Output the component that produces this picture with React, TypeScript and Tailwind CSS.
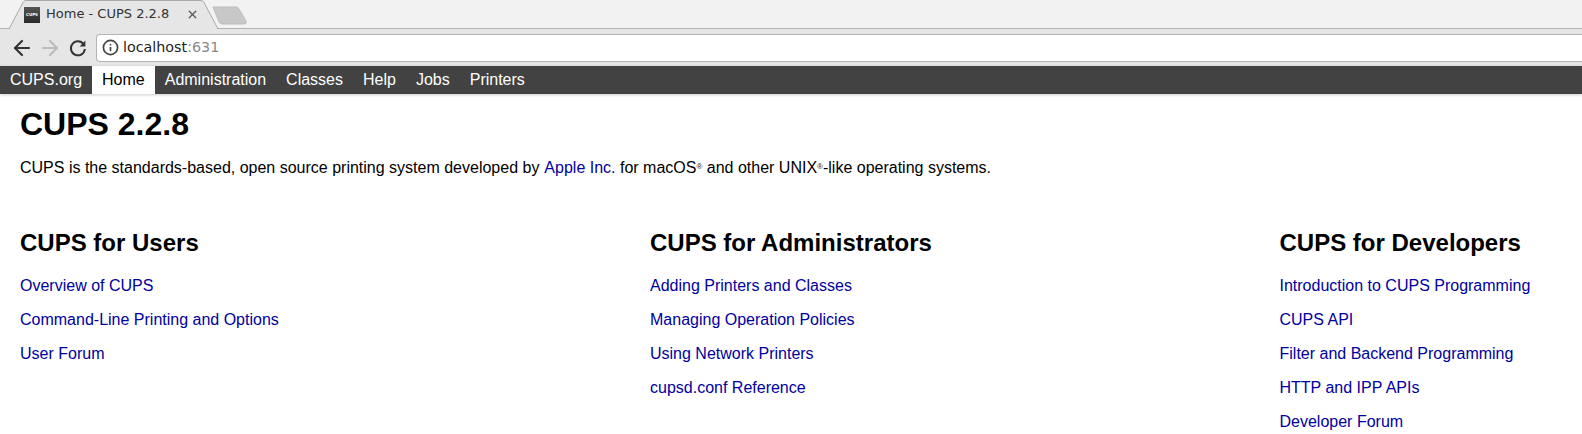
import { ArrowLeft, ArrowRight, Info, X } from 'lucide-react';

const navItems = ['Administration', 'Classes', 'Help', 'Jobs', 'Printers'];

const columns = [
  {
    title: 'CUPS for Users',
    links: ['Overview of CUPS', 'Command-Line Printing and Options', 'User Forum'],
  },
  {
    title: 'CUPS for Administrators',
    links: ['Adding Printers and Classes', 'Managing Operation Policies', 'Using Network Printers', 'cupsd.conf Reference'],
  },
  {
    title: 'CUPS for Developers',
    links: ['Introduction to CUPS Programming', 'CUPS API', 'Filter and Backend Programming', 'HTTP and IPP APIs', 'Developer Forum'],
  },
];

export default function App() {
  return (
    <div className="h-[434px] overflow-hidden bg-white font-['Liberation_Sans',Arial,sans-serif] text-black">
      {/* Browser tab strip */}
      <div className="relative h-[29px] bg-[#f2f2f2] border-b border-[#b4b4b4] font-['DejaVu_Sans',sans-serif]">
        <svg className="absolute left-[6px] top-0" width="244" height="29" viewBox="0 0 244 29">
          <path d="M3 29 L17 2.5 Q18 0.5 20 0.5 L195 0.5 Q197 0.5 198 2.5 L212 29 Z" fill="#e6e6e6" stroke="#a8a8a8" />
          <path d="M4 29 L211 29" stroke="#e6e6e6" strokeWidth="2" />
          <path d="M207 7 L230 7 Q232 7 233 9 L240 21 Q241 24 238 24 L216 24 Q214 24 213 22 Z" fill="#c8c8c8" stroke="#bdbdbd" />
        </svg>
        <div className="absolute left-[24px] top-[7px] flex h-4 w-4 items-center justify-center bg-gradient-to-b from-[#555] to-[#2a2a2a] text-[4px] font-bold leading-none text-white">
          CUPS
        </div>
        <span className="absolute left-[46px] top-[6px] text-[13px] leading-4 text-[#333]">Home - CUPS 2.2.8</span>
        <X className="absolute left-[186px] top-[8px] text-[#555]" size={13} strokeWidth={2.4} />
      </div>

      {/* Toolbar */}
      <div className="flex h-[37px] items-center bg-[#e6e6e6]">
        <div className="flex w-[96px] items-center pl-[10px]">
          <ArrowLeft className="text-[#333]" size={24} strokeWidth={2.2} />
          <ArrowRight className="ml-[4px] text-[#bdbdbd]" size={24} strokeWidth={2.2} />
          <svg className="ml-[4px] text-[#333]" width="24" height="24" viewBox="0 0 24 24" fill="none">
            <path d="M17.6 8.2 A7 7 0 1 0 18.9 13" stroke="currentColor" strokeWidth="2" />
            <path d="M19.4 4.6 V10.4 H13.6 Z" fill="currentColor" />
          </svg>
        </div>
        <div className="flex h-[28px] flex-1 items-center rounded-l-sm border-y border-l border-[#b4b4b4] bg-white pl-[5px] font-['DejaVu_Sans',sans-serif] text-[14.3px]">
          <Info className="text-[#444]" size={17} strokeWidth={2.4} />
          <span className="ml-[4px] text-[#222]">localhost</span>
          <span className="text-[#888]">:631</span>
        </div>
      </div>

      {/* CUPS navigation */}
      <div className="flex h-[28px] items-center bg-[#424242] text-base text-white shadow-[0_1px_3px_rgba(0,0,0,0.2)]">
        <a className="px-[10px]">CUPS.org</a>
        <a className="flex h-full items-center bg-white px-[10px] text-black">Home</a>
        {navItems.map((item) => (
          <a key={item} className="px-[10px]">{item}</a>
        ))}
      </div>

      {/* Page content */}
      <div className="px-5">
        <h1 className="mt-[8px] text-[32px] font-bold leading-[44px]">CUPS 2.2.8</h1>
        <p className="mt-[12px] text-base leading-5">
          CUPS is the standards-based, open source printing system developed by{' '}
          <a className="ml-[0.5px] text-[#0000a0]">Apple Inc.</a> for macOS
          <sup className="text-[8px] text-[#222]">®</sup> and other UNIX
          <sup className="text-[8px] text-[#222]">®</sup>-like operating systems.
        </p>
        <div className="mt-[49px] grid grid-cols-[630px_629.5px_1fr]">
          {columns.map((col) => (
            <div key={col.title}>
              <h2 className="text-2xl font-bold leading-8">{col.title}</h2>
              <div className="mt-[17px] flex flex-col gap-[14px]">
                {col.links.map((link) => (
                  <a key={link} className="text-base leading-5 text-[#0000a0]">{link}</a>
                ))}
              </div>
            </div>
          ))}
        </div>
      </div>
    </div>
  );
}
